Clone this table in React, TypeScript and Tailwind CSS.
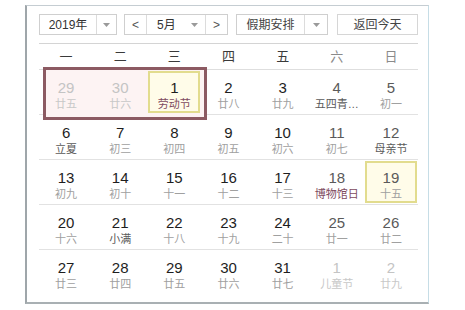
import React from 'react';

type Day = { n: number; lunar: string; other?: boolean; holiday?: 'red' | 'dark'; weekend?: boolean; mark?: boolean };

const rows: Day[][] = [
  [
    { n: 29, lunar: '廿五', other: true },
    { n: 30, lunar: '廿六', other: true },
    { n: 1, lunar: '劳动节', holiday: 'red', mark: true },
    { n: 2, lunar: '廿八' },
    { n: 3, lunar: '廿九' },
    { n: 4, lunar: '五四青…', holiday: 'dark', weekend: true },
    { n: 5, lunar: '初一', weekend: true },
  ],
  [
    { n: 6, lunar: '立夏', holiday: 'dark' },
    { n: 7, lunar: '初三' },
    { n: 8, lunar: '初四' },
    { n: 9, lunar: '初五' },
    { n: 10, lunar: '初六' },
    { n: 11, lunar: '初七', weekend: true },
    { n: 12, lunar: '母亲节', holiday: 'dark', weekend: true },
  ],
  [
    { n: 13, lunar: '初九' },
    { n: 14, lunar: '初十' },
    { n: 15, lunar: '十一' },
    { n: 16, lunar: '十二' },
    { n: 17, lunar: '十三' },
    { n: 18, lunar: '博物馆日', holiday: 'red', weekend: true },
    { n: 19, lunar: '十五', weekend: true, mark: true },
  ],
  [
    { n: 20, lunar: '十六' },
    { n: 21, lunar: '小满', holiday: 'dark' },
    { n: 22, lunar: '十八' },
    { n: 23, lunar: '十九' },
    { n: 24, lunar: '二十' },
    { n: 25, lunar: '廿一', weekend: true },
    { n: 26, lunar: '廿二', weekend: true },
  ],
  [
    { n: 27, lunar: '廿三' },
    { n: 28, lunar: '廿四' },
    { n: 29, lunar: '廿五' },
    { n: 30, lunar: '廿六' },
    { n: 31, lunar: '廿七' },
    { n: 1, lunar: '儿童节', other: true },
    { n: 2, lunar: '廿九', other: true },
  ],
];

const weekdays = ['一', '二', '三', '四', '五', '六', '日'];

const Caret = () => (
  <svg width="7" height="4" viewBox="0 0 7 4">
    <path d="M0 0h7L3.5 4z" fill="#9a9a9a" />
  </svg>
);

function Cell({ d }: { d: Day }) {
  const numColor = d.other ? 'text-[#c4c4c4]' : d.weekend ? 'text-[#5a5a5a]' : 'text-[#1e1e1e]';
  const lunarColor = d.other
    ? 'text-[#c8c8c8]'
    : d.holiday === 'red'
      ? 'text-[#7e4a60]'
      : d.holiday === 'dark'
        ? 'text-[#5a5a5a]'
        : 'text-[#a0a0a0]';
  return (
    <div className="relative flex flex-col items-center pt-[9px]">
      {d.mark && (
        <div className="absolute inset-x-[1px] inset-y-[1px] border-2 border-[#e2dc8e] bg-[#fffce9]" />
      )}
      <div className={`relative text-[15px] leading-[18px] ${numColor}`}>{d.n}</div>
      <div className={`relative text-[11px] leading-[14px] ${lunarColor}`}>{d.lunar}</div>
    </div>
  );
}

export default function App() {
  return (
    <div className="w-[465px] h-[310px] bg-white pt-[5px] pl-[25px]" style={{ fontFamily: '"Liberation Sans", "Noto Sans CJK SC", sans-serif' }}>
      <div className="w-[404px] h-[299px] border-l-2 border-b-2 border-t border-r border-l-[#9fa6aa] border-b-[#a9b0b3] border-t-[#c5cdd2] border-r-[#c6dde6] pl-[12px] pr-[10px] pt-[8px]">
        <div className="flex items-center h-[21px] text-[12px] text-[#333]">
          <div className="flex h-full w-[78px] border border-[#cfcfcf]">
            <div className="flex-1 flex items-center justify-center">2019年</div>
            <div className="w-[20px] border-l border-[#dcdcdc] flex items-center justify-center"><Caret /></div>
          </div>
          <div className="flex h-full w-[104px] ml-[7px] border border-[#cfcfcf]">
            <div className="w-[21px] flex items-center justify-center text-[#555]">&lt;</div>
            <div className="flex-1 border-l border-[#dcdcdc] flex items-center justify-between pl-[10px] pr-[7px]">
              <span>5月</span>
              <Caret />
            </div>
            <div className="w-[22px] border-l border-[#dcdcdc] flex items-center justify-center text-[#555]">&gt;</div>
          </div>
          <div className="flex h-full w-[92px] ml-[8px] border border-[#cfcfcf]">
            <div className="flex-1 flex items-center justify-center text-[#444]">假期安排</div>
            <div className="w-[23px] border-l border-[#dcdcdc] flex items-center justify-center"><Caret /></div>
          </div>
          <div className="flex h-full w-[81px] ml-[9px] border border-[#d6d6d6] items-center justify-center text-[#444]">返回今天</div>
        </div>
        <div className="mt-[8px] border-t border-[#d4d4d4]" />
        <div className="grid grid-cols-7 h-[26px] items-center border-b border-[#dedede] text-[13px]">
          {weekdays.map((w, i) => (
            <div key={w} className={`text-center ${i >= 5 ? 'text-[#8a8a8a]' : 'text-[#3a3a3a]'}`}>{w}</div>
          ))}
        </div>
        {rows.map((r, ri) => (
          <div key={ri} className={`relative grid grid-cols-7 h-[45px] ${ri < 4 ? 'border-b border-[#e2e2e2]' : ''}`}>
            {ri === 0 && (
              <div className="absolute left-[4px] top-[-3px] w-[164px] h-[53px] border-[3px] border-[#8c5a62] bg-[#fdf3f3]" />
            )}
            {r.map((d, i) => (
              <Cell key={i} d={d} />
            ))}
          </div>
        ))}
      </div>
    </div>
  );
}
